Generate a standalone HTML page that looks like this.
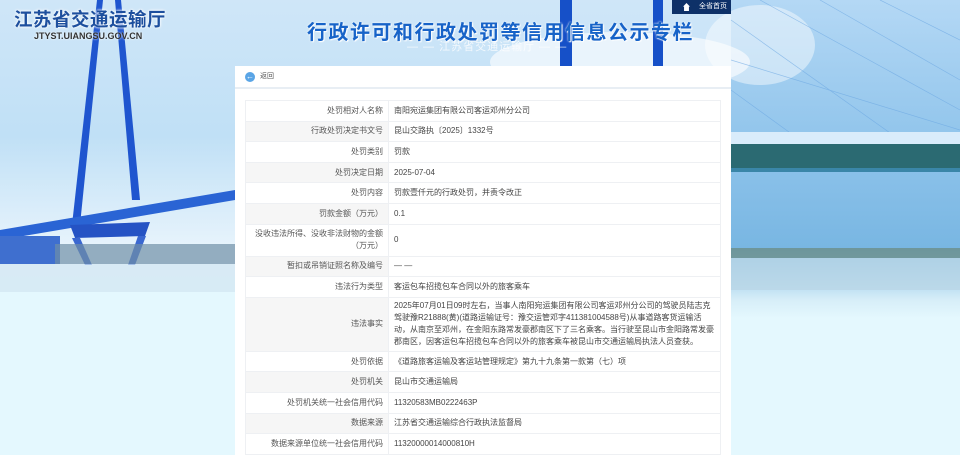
<!DOCTYPE html>
<html><head><meta charset="utf-8">
<style>
*{margin:0;padding:0;box-sizing:border-box}
body{width:960px;height:455px;overflow:hidden;position:relative;font-family:"Liberation Sans","Noto Sans CJK SC",sans-serif;background:#e4f8fe}
#bg{position:absolute;left:0;top:0}
.logo{position:absolute;left:14px;top:6px;color:#1d4f9e;font-size:18.5px;font-weight:bold;letter-spacing:0.5px;text-shadow:0 0 2px #fff,0 0 3px #fff}
.url{position:absolute;left:34px;top:31px;font-size:9px;color:#333;font-weight:bold;text-shadow:0 0 2px #fff}
.title{position:absolute;left:307px;top:16px;color:#1763c8;font-size:20px;font-weight:bold;letter-spacing:1.5px;text-shadow:0 0 2px #fff,1px 1px 1px #fff}
.sub{position:absolute;left:407px;top:38px;color:rgba(255,255,255,.75);font-size:11px;letter-spacing:1px}
.nav{position:absolute;left:672px;top:0;width:59px;height:14px;background:#0e3168;color:#fff;font-size:7px;line-height:14px;padding-left:27px}
.nav i{position:absolute;left:11px;top:3px;width:7px;height:8px;background:#fff;clip-path:polygon(50% 0,100% 45%,85% 45%,85% 100%,15% 100%,15% 45%,0 45%)}
.panel{position:absolute;left:235px;top:66px;width:496px;height:389px;background:#fff}
.back{height:23px;border-bottom:2px solid #e8eef4;font-size:7px;color:#555;line-height:22px;padding-left:25px;position:relative}
.back i{position:absolute;left:10px;top:6px;width:10px;height:10px;border-radius:50%;background:#5aa5e6;color:#fff;font-size:8px;line-height:10px;text-align:center;font-style:normal}
table{position:absolute;left:10px;top:34px;width:476px;border-collapse:collapse;font-size:8px;color:#444}
td{border:1px solid #eef0f3;padding:0 5px;height:20.6px;line-height:12px}
td.l{width:143px;text-align:right;color:#555}
tr:nth-child(even) td{background:#f6f6f6}
tr:nth-child(even) td+td{background:#fff}
</style></head><body>
<svg id="bg" width="960" height="455" viewBox="0 0 960 455">
<defs>
<linearGradient id="sky" x1="0" y1="0" x2="0" y2="1"><stop offset="0" stop-color="#cfe6f8"/><stop offset=".3" stop-color="#c0e0f6"/><stop offset=".55" stop-color="#e8f4fc"/><stop offset=".64" stop-color="#e4f8fe"/></linearGradient>
<linearGradient id="rsky" x1="0" y1="0" x2="0" y2="1"><stop offset="0" stop-color="#b4d8f5"/><stop offset=".35" stop-color="#8cc2ea"/><stop offset=".55" stop-color="#78b6e2"/><stop offset=".66" stop-color="#d7eef8"/><stop offset=".7" stop-color="#e4f8fe"/></linearGradient>
</defs>
<rect width="960" height="455" fill="url(#sky)"/>
<rect x="731" y="0" width="229" height="455" fill="url(#rsky)"/>
<ellipse cx="620" cy="62" rx="130" ry="30" fill="#fff" opacity=".6"/>
<ellipse cx="760" cy="45" rx="55" ry="40" fill="#fff" opacity=".45"/>
<g stroke="#6aa6e2" stroke-width=".7" opacity=".6">
<line x1="731" y1="60" x2="960" y2="130"/><line x1="760" y1="0" x2="960" y2="110"/><line x1="820" y1="0" x2="960" y2="80"/><line x1="880" y1="0" x2="960" y2="40"/><line x1="731" y1="20" x2="900" y2="140"/><line x1="731" y1="90" x2="800" y2="140"/>
</g>
<rect x="560" y="0" width="12" height="66" fill="#1650c8"/><rect x="653" y="0" width="10" height="66" fill="#1650c8"/>
<rect x="731" y="132" width="229" height="12" fill="#d9ecfb"/>
<rect x="731" y="144" width="229" height="24" fill="#2b6a72"/>
<rect x="731" y="168" width="229" height="4" fill="#3a86a8"/>
<rect x="731" y="248" width="229" height="10" fill="#6b8f8a" opacity=".8"/>
<rect x="731" y="258" width="229" height="32" fill="#b9d6e6" opacity=".8"/>
<polygon points="97,0 103,0 80,225 72,225" fill="#1f55cf"/>
<polygon points="115,0 121,0 140,200 132,200" fill="#1f55cf"/>
<polygon points="0,230 235,190 235,200 0,240" fill="#2a64d4"/>
<rect x="0" y="236" width="60" height="28" fill="#3f6fcf"/>
<polygon points="70,225 150,222 145,236 75,238" fill="#2553c4"/>
<polygon points="72,238 85,265 92,265 80,238" fill="#3a67d0"/>
<polygon points="138,236 128,265 135,265 146,236" fill="#3a67d0"/>
<rect x="55" y="244" width="180" height="20" fill="#6f8ea6" opacity=".7"/>
<rect x="0" y="264" width="235" height="28" fill="#d2e6f1" opacity=".7"/>
</svg>
<div class="logo">江苏省交通运输厅</div>
<div class="url">JTYST.UIANGSU.GOV.CN</div>
<div class="title">行政许可和行政处罚等信用信息公示专栏</div>
<div class="sub">— — 江苏省交通运输厅 — —</div>
<div class="nav"><i></i>全省首页</div>
<div class="panel">
<div class="back"><i>←</i>返回</div>
<table>
<tr><td class="l">处罚相对人名称</td><td>南阳宛运集团有限公司客运邓州分公司</td></tr>
<tr><td class="l">行政处罚决定书文号</td><td>昆山交路执〔2025〕1332号</td></tr>
<tr><td class="l">处罚类别</td><td>罚款</td></tr>
<tr><td class="l">处罚决定日期</td><td>2025-07-04</td></tr>
<tr><td class="l">处罚内容</td><td>罚款壹仟元的行政处罚，并责令改正</td></tr>
<tr><td class="l">罚款金额（万元）</td><td>0.1</td></tr>
<tr><td class="l" style="height:32px">没收违法所得、没收非法财物的金额（万元）</td><td>0</td></tr>
<tr><td class="l">暂扣或吊销证照名称及编号</td><td>— —</td></tr>
<tr><td class="l">违法行为类型</td><td>客运包车招揽包车合同以外的旅客乘车</td></tr>
<tr><td class="l" style="height:54px">违法事实</td><td>2025年07月01日09时左右，当事人南阳宛运集团有限公司客运邓州分公司的驾驶员陆志克驾驶豫R21888(黄)(道路运输证号：豫交运管邓字411381004588号)从事道路客货运输活动，从南京至邓州，在金阳东路常发豪郡南区下了三名乘客。当行驶至昆山市金阳路常发豪郡南区，因客运包车招揽包车合同以外的旅客乘车被昆山市交通运输局执法人员查获。</td></tr>
<tr><td class="l">处罚依据</td><td>《道路旅客运输及客运站管理规定》第九十九条第一款第（七）项</td></tr>
<tr><td class="l">处罚机关</td><td>昆山市交通运输局</td></tr>
<tr><td class="l">处罚机关统一社会信用代码</td><td>11320583MB0222463P</td></tr>
<tr><td class="l">数据来源</td><td>江苏省交通运输综合行政执法监督局</td></tr>
<tr><td class="l">数据来源单位统一社会信用代码</td><td>11320000014000810H</td></tr>
</table>
</div>
</body></html>
